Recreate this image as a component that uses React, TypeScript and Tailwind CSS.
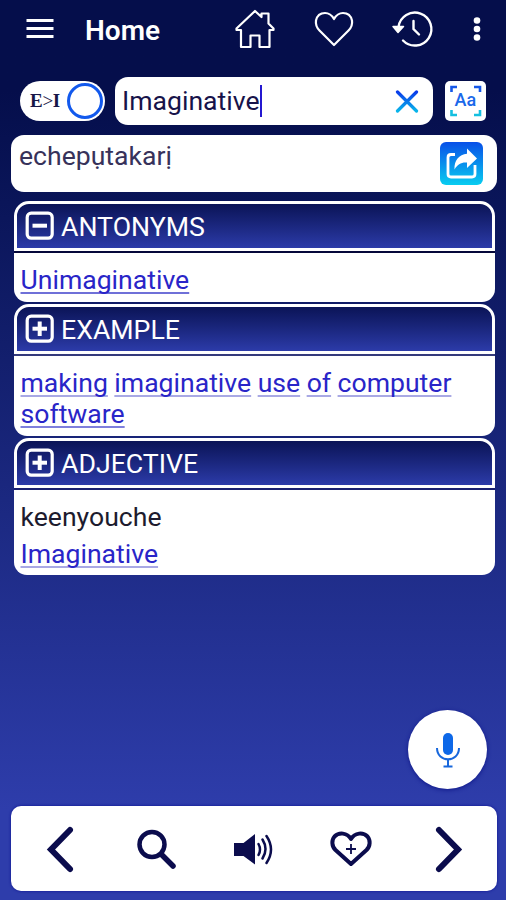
import React from 'react';

interface Line {
    text: string;
    link: boolean;
    className: string;
    underlineClass?: string;
}

interface Section {
    title: string;
    open: boolean;
    headerClass: string;
    dividerClass: string;
    bodyClass: string;
    lines: Line[];
}

const SECTIONS: Section[] = [
    {
        title: 'ANTONYMS',
        open: true,
        headerClass: 'mt-[9px] h-[50px]',
        dividerClass: 'bg-[#05083a]',
        bodyClass: 'h-[49px]',
        lines: [{ text: 'Unimaginative', link: true, className: 'mt-[10px]', underlineClass: 'decoration-[#6f70d8]' }],
    },
    {
        title: 'EXAMPLE',
        open: false,
        headerClass: 'mt-[2px] h-[50px]',
        dividerClass: 'bg-[#343a7c]',
        bodyClass: 'h-[80px]',
        lines: [
            { text: 'making imaginative use of computer', link: true, className: 'mt-[10px]', underlineClass: 'decoration-[#a9a9e4]' },
            { text: 'software', link: true, className: '', underlineClass: 'decoration-[#7f80dc]' },
        ],
    },
    {
        title: 'ADJECTIVE',
        open: false,
        headerClass: 'mt-[2px] h-[50px]',
        dividerClass: 'bg-[#1a2070]',
        bodyClass: 'h-[85px]',
        lines: [
            { text: 'keenyouche', link: false, className: 'mt-[10px]' },
            { text: 'Imaginative', link: true, className: 'mt-[6px]', underlineClass: 'decoration-[#a9a9e4]' },
        ],
    },
];

const ToggleBox: React.FC<{ open: boolean }> = ({ open }) => (
    <svg className="h-[30px] w-[30px] shrink-0" viewBox="0 0 30 30" fill="none" stroke="#fff">
        <rect x="2.2" y="2.2" width="25" height="25" rx="4" strokeWidth="3.2" />
        <path d="M7.500 14.700h14.500" strokeWidth="4" />
        {!open && <path d="M14.700 7.500v14.500" strokeWidth="4" />}
    </svg>
);

const TopBar: React.FC = () => (
    <header className="flex h-[57px] shrink-0 items-center">
        <svg className="ml-[26px] h-[22px] w-[28px]" viewBox="0 0 28 22" stroke="#fff" strokeWidth="3">
            <path d="M.5 2.500h27M.5 10.500h27M.5 18.500h27" />
        </svg>
        <h1 className="mt-[4px] ml-[31px] w-[76px] text-[28px] leading-8 font-semibold">Home</h1>
        <svg className="ml-[73px] h-[42px] w-[42px] shrink-0" viewBox="0 0 42 42" fill="none" stroke="#fff" strokeWidth="2.2" strokeLinejoin="round">
            <path d="M2.500 20.500 21 3l6.500 6V5.500h7v10l5 5v1.500h-4V39H25.500V27.500H16.500V39H7V22H2.500z" />
        </svg>
        <svg className="ml-[37px] h-[42px] w-[42px] shrink-0" viewBox="0 0 42 42" fill="none" stroke="#fff" strokeWidth="2.2" strokeLinejoin="round">
            <path d="M21 37 6.500 22.500C3.500 19.500 2.500 16 3 12.500 4 8 7.500 5 12 5c4 0 7 2.500 9 6 2-3.500 5-6 9-6 4.500 0 8 3 9 7.500.500 3.500-.500 7-3.500 10z" />
        </svg>
        <svg className="ml-[36px] h-[42px] w-[44px] shrink-0" viewBox="0 0 44 42" fill="none" stroke="#fff" strokeWidth="2.4" strokeLinecap="round">
            <path d="M7.500 19A16.500 16.500 0 1 1 12 32.500" />
            <path d="M22.500 13v8l5.500 5.500" />
            <path d="M2 18.500h10.500L7 24.500z" fill="#fff" strokeWidth="1.500" strokeLinejoin="round" />
        </svg>
        <svg className="ml-[36px] h-[28px] w-[12px] shrink-0" viewBox="0 0 12 28" fill="#fff">
            <circle cx="6" cy="5.500" r="3.300" />
            <circle cx="6" cy="14" r="3.300" />
            <circle cx="6" cy="22.500" r="3.300" />
        </svg>
    </header>
);

const SearchRow: React.FC = () => (
    <div className="mt-[20px] flex h-[48px] shrink-0 items-center pl-[20px]">
        <div className="flex h-[40px] w-[85px] items-center justify-between rounded-full bg-white pr-[2px] pl-[10px]">
            <span className="font-['Liberation_Serif',serif] text-[19px] tracking-[-0.3px] text-[#171747]">
                <b>E</b>&gt;<b>I</b>
            </span>
            <span className="h-[36px] w-[36px] rounded-full border-[3px] border-[#1259ed]" />
        </div>
        <div className="ml-[10px] flex h-[48px] w-[318px] items-center rounded-[13px] bg-white pr-[14px] pl-[7px]">
            <span className="text-[26.600px] leading-8 whitespace-nowrap text-[#17134a]">Imaginative</span>
            <span className="h-[32px] w-[2px] bg-[#2418d0]" />
            <svg className="ml-auto h-[24px] w-[24px]" viewBox="0 0 24 24" fill="none" strokeWidth="3.200" strokeLinecap="round">
                <defs>
                    <linearGradient id="clear" x1="0" y1="0" x2="0" y2="1">
                        <stop offset="0" stopColor="#0a3bea" />
                        <stop offset="1" stopColor="#08b5ea" />
                    </linearGradient>
                </defs>
                <path d="M2.500 3l19 19M21.500 3l-19 19" stroke="url(#clear)" />
            </svg>
        </div>
        <div className="ml-[12px] h-[40px] w-[41px] rounded-[5px] bg-white">
            <svg className="h-[40px] w-[41px]" viewBox="0 0 41 40" fill="none" strokeWidth="2.600">
                <path d="M6.500 11V6h5.500M29 6h6v5" stroke="#1557e8" />
                <path d="M6.500 29v5h5.500M29 34h6v-5" stroke="#14bfe0" />
                <text x="20.300" y="25.200" textAnchor="middle" fill="#1a68ea" fontSize="18" fontWeight="500" fontFamily="Roboto, sans-serif">Aa</text>
            </svg>
        </div>
    </div>
);

const ResultCard: React.FC = () => (
    <div className="mt-[10px] ml-[11px] flex h-[57px] w-[486px] shrink-0 justify-between rounded-[13px] bg-white pr-[14px] pl-[8px]">
        <span className="mt-[5px] text-[26.600px] leading-8 text-[#37325a]">echepụtakarị</span>
        <svg className="mt-[7px] h-[43px] w-[43px]" viewBox="0 0 43 43" fill="none">
            <defs>
                <linearGradient id="share" x1="0" y1="0" x2="0" y2="1">
                    <stop offset="0" stopColor="#084fe8" />
                    <stop offset="1" stopColor="#08cdf0" />
                </linearGradient>
            </defs>
            <rect width="43" height="43" rx="6" fill="url(#share)" />
            <path d="M15 12.500H11Q8 12.500 8 15.500V32Q8 35 11 35H32Q35 35 35 32V23" stroke="#fff" strokeWidth="2.800" />
            <path d="M27 6.500 37 16.500 27 26V20.500C21.500 20 17.500 22 14.500 27.500 14 18.500 19 12.500 27 11.800z" fill="#fff" />
        </svg>
    </div>
);

const WordSection: React.FC<{ section: Section }> = ({ section }) => (
    <section className="ml-[14px] w-[481px] shrink-0">
        <div className={`${section.headerClass} flex items-center rounded-t-[15px] border-[3px] border-white bg-linear-to-b from-[#0b1457] to-[#2c3ba9] pl-[8px]`}>
            <ToggleBox open={section.open} />
            <h2 className="mt-[2px] ml-[6px] text-[26.700px] leading-8">{section.title}</h2>
        </div>
        <div className={`${section.dividerClass} h-[2px]`} />
        <div className={`${section.bodyClass} rounded-b-[13px] bg-white pt-px pl-[6.500px]`}>
            {section.lines.map((line) => (
                <p key={line.text} className={`${line.className} flex h-[31px] gap-[6.500px] text-[26.600px] leading-[31px] whitespace-nowrap`}>
                    {line.link
                        ? line.text.split(' ').map((word) => (
                            <a key={word} className={`${line.underlineClass} text-[#2925c8] underline decoration-2 underline-offset-[3px] [text-decoration-skip-ink:none]`}>{word}</a>
                        ))
                        : <span className="text-[#1d1b2e]">{line.text}</span>}
                </p>
            ))}
        </div>
    </section>
);

const BottomBar: React.FC = () => (
    <nav className="mt-[17px] ml-[11px] flex h-[85px] w-[486px] shrink-0 items-center rounded-[10px] bg-white text-[#0b0c4d] shadow-[0_0_3px_#0b1090]">
        <svg className="ml-[34px] h-[50px] w-[30px]" viewBox="0 0 30 50" fill="none" stroke="currentColor" strokeWidth="6" strokeLinecap="round">
            <path d="M25 6 6 25.500 25 45" />
        </svg>
        <svg className="ml-[60px] h-[42px] w-[42px]" viewBox="0 0 42 42" fill="none" stroke="currentColor" strokeLinecap="round">
            <circle cx="17" cy="16.500" r="12.500" strokeWidth="4.500" />
            <path d="M26.500 26.500 38 38" strokeWidth="5.500" />
        </svg>
        <svg className="ml-[56px] h-[36px] w-[42px]" viewBox="0 0 42 36" fill="none" stroke="currentColor" strokeLinecap="round">
            <path d="M1 12h9.500L22 3v30.500L10.500 25H1z" fill="currentColor" stroke="none" />
            <path d="M25.500 13q3 5.500 0 11M29.500 8.500q6 9.500 0 19M33.500 5q9 13.500 0 27" strokeWidth="2.500" />
        </svg>
        <svg className="ml-[54px] h-[42px] w-[44px]" viewBox="0 0 44 42" fill="none" stroke="currentColor">
            <path d="M22 36 6.500 22C2.500 18 2.500 12 5.500 8.500 10 4 18 4.500 22 11 26 4.500 34 4 38.500 8.500c3 3.500 3 9.500-1 13.500z" strokeWidth="4" strokeLinejoin="round" />
            <path d="M22 16v10M17 21h10" strokeWidth="1.800" />
        </svg>
        <svg className="ml-[61px] h-[50px] w-[30px]" viewBox="0 0 30 50" fill="none" stroke="currentColor" strokeWidth="6" strokeLinecap="round">
            <path d="M5 6 24 25.500 5 45" />
        </svg>
    </nav>
);

const App: React.FC = () => {
    return (
        <div className="flex h-[900px] w-[506px] flex-col overflow-hidden bg-linear-to-b from-[#050e4b] from-10% to-[#2e3dab] to-90% font-[Roboto,sans-serif] text-white">
            <TopBar />
            <SearchRow />
            <ResultCard />
            {SECTIONS.map((section) => (
                <WordSection key={section.title} section={section} />
            ))}
            <div className="mt-auto mr-[19px] flex h-[79px] w-[79px] shrink-0 items-center justify-center self-end rounded-full bg-white shadow-[0_1px_4px_#10188a]">
                <svg className="h-[38px] w-[26px]" viewBox="0 0 26 38" fill="none" stroke="#1767dc" strokeWidth="2">
                    <rect x="8" y="2" width="10" height="22" rx="5" fill="#0d68e8" stroke="none" />
                    <path d="M2 17c0 15 22 15 22 0M13 28.500V35M8.500 35.500h9" />
                </svg>
            </div>
            <BottomBar />
            <div className="h-[9px] shrink-0" />
        </div>
    );
};

export default App;
